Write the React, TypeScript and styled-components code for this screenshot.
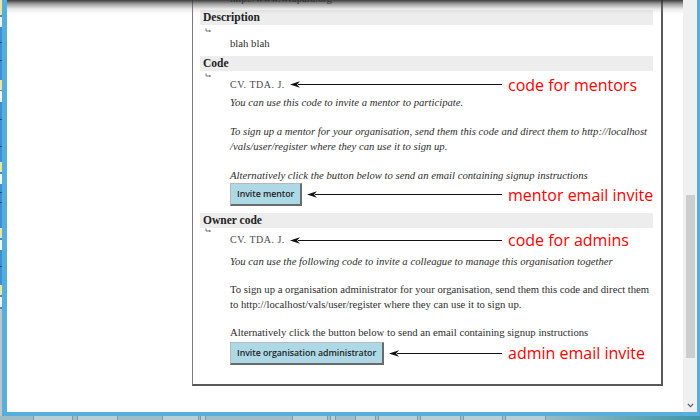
import React from "react";
import styled, { createGlobalStyle } from "styled-components";

const GlobalStyle = createGlobalStyle`
  html, body { margin: 0; padding: 0; }
  body { width: 700px; height: 420px; overflow: hidden; background: #5ab3de; }
`;

const Screen = styled.div`
  width: 700px;
  height: 420px;
  display: flex;
  flex-direction: column;
  overflow: hidden;
  background: #5ab3de;
`;

const Desktop = styled.div`
  display: flex;
  height: 416px;
`;

const LeftStrip = styled.div`
  width: 2px;
  display: flex;
  flex-direction: column;
  background: #3c8fd0;
`;

const StripMark = styled.div<{ $gap: number; $h: number; $c: string }>`
  flex-shrink: 0;
  margin-top: ${(p) => p.$gap}px;
  height: ${(p) => p.$h}px;
  background: ${(p) => p.$c};
`;

const StripRest = styled.div`
  flex: 1;
  margin-top: 2px;
  background: #c4c4c4;
`;

const Window = styled.div`
  flex: 1;
  display: flex;
  border-left: 5px solid #55aedc;
  border-right: 3px solid #55aedc;
  border-bottom: 4px solid #55aedc;
`;

const Viewport = styled.div`
  flex: 1;
  position: relative;
  overflow: hidden;
  background: #fff;
`;

const TopShade = styled.div`
  position: absolute;
  left: 0;
  right: 0;
  top: 0;
  height: 14px;
  pointer-events: none;
  background: linear-gradient(
    to bottom,
    rgba(40, 40, 40, 0.9) 0px,
    rgba(80, 80, 80, 0.55) 4px,
    rgba(150, 150, 150, 0.2) 9px,
    rgba(255, 255, 255, 0) 14px
  );
`;

const Page = styled.div`
  padding-left: 185px;
`;

const Panel = styled.div`
  width: 453px;
  margin-top: -9px;
  border-left: 1px solid #7a7a7a;
  border-right: 2px solid #595959;
  border-bottom: 2px solid #595959;
  padding: 0 8px 19px 7px;
  font-family: "Liberation Serif", "Times New Roman", serif;
  font-size: 10.7px;
  color: #2e2e2e;
`;

const UrlLine = styled.div`
  padding-left: 30px;
  height: 14px;
  line-height: 14px;
`;

const FieldLabel = styled.div<{ $mt: number }>`
  margin-top: ${(p) => p.$mt}px;
  height: 15px;
  line-height: 15px;
  padding-left: 3px;
  background: #ededed;
  font-weight: bold;
  font-size: 11.5px;
  color: #222;
`;

const Marker = styled.div<{ $h: number }>`
  height: ${(p) => p.$h}px;
  display: flex;
  align-items: flex-end;
  padding-left: 5px;
  svg { display: block; }
`;

const Value = styled.div<{ $mt: number }>`
  margin-top: ${(p) => p.$mt}px;
  padding-left: 30px;
  line-height: 14.5px;
`;

const Para = styled.p<{ $italic?: boolean; $mt: number }>`
  margin: ${(p) => p.$mt}px 0 0;
  padding-left: 30px;
  line-height: 14.5px;
  white-space: nowrap;
  font-style: ${(p) => (p.$italic ? "italic" : "normal")};
`;

const AnnotatedRow = styled.div<{ $mt: number }>`
  margin-top: ${(p) => p.$mt}px;
  padding-left: 30px;
  display: grid;
  grid-template-columns: auto 1fr 151px;
  align-items: center;
`;

const Code = styled.span`
  font-size: 10px;
  letter-spacing: 0.5px;
  line-height: 14.5px;
  color: #4a4a4a;
  white-space: nowrap;
`;

const Arrow = styled.div`
  display: flex;
  align-items: center;
  margin-left: 5px;
  svg { display: block; flex-shrink: 0; }
`;

const ArrowLine = styled.div`
  flex: 1;
  height: 1px;
  margin-left: -3px;
  background: #111;
`;

const Note = styled.span`
  padding-left: 6px;
  font-family: "Open Sans", "Noto Sans", sans-serif;
  font-size: 16px;
  line-height: 14px;
  color: #ff0000;
  white-space: nowrap;
`;

const InviteButton = styled.button`
  height: 23px;
  padding: 0 6px;
  margin: 0;
  background: #add8e6;
  border-style: solid;
  border-width: 1px 2px 2px 1px;
  border-color: #b9b9b9 #6a6a6a #6a6a6a #b9b9b9;
  font-family: "Open Sans", "Noto Sans", sans-serif;
  font-weight: 600;
  font-size: 8.8px;
  letter-spacing: -0.05px;
  color: #1f1f1f;
  white-space: nowrap;
`;

const Scrollbar = styled.div`
  width: 14px;
  display: flex;
  flex-direction: column;
  align-items: center;
  background: #f0f0f0;
`;

const Thumb = styled.div`
  margin-top: 195px;
  width: 9px;
  height: 163px;
  background: #cdcdcd;
`;

const ScrollSpacer = styled.div`
  flex: 1;
`;

const ScrollArrow = styled.div`
  height: 14px;
  display: flex;
  align-items: center;
  justify-content: center;
  svg { display: block; }
`;

const Taskbar = styled.div`
  height: 4px;
  display: flex;
  background: linear-gradient(90deg, #9dbcc6 0%, #a4c0c9 75%, #3e97a6 100%);
`;

const TaskItem = styled.div<{ $gap: number; $w: number }>`
  margin-left: ${(p) => p.$gap}px;
  width: ${(p) => p.$w}px;
  box-sizing: border-box;
  background: #b9cfd6;
  border-left: 1px solid #7c9ba6;
  border-right: 1px solid #7c9ba6;
`;

const stripMarks: [number, number, string][] = [
  [0, 15, "#efe6a2"],
  [2, 10, "#f4f8fb"],
  [15, 1, "#1d4f7a"],
  [17, 1, "#1d4f7a"],
  [19, 10, "#efe6a2"],
  [1, 11, "#f4f8fb"],
  [17, 1, "#1d4f7a"],
  [26, 1, "#1d4f7a"],
  [15, 10, "#efe6a2"],
  [2, 10, "#f4f8fb"],
  [8, 1, "#1d4f7a"],
  [9, 1, "#1d4f7a"],
  [25, 10, "#efe6a2"],
  [2, 10, "#f4f8fb"],
  [16, 1, "#1d4f7a"],
  [18, 10, "#efe6a2"],
  [2, 10, "#f4f8fb"],
];

const taskItems: [number, number][] = [
  [33, 40],
  [4, 41],
  [44, 37],
  [1, 6],
  [86, 36],
  [2, 6],
  [19, 21],
  [2, 40],
  [2, 41],
  [2, 40],
  [2, 41],
];

const FieldMarker = () => (
  <svg width="7" height="5" viewBox="0 0 7 5">
    <path d="M1 0.5 V3 H5.5" fill="none" stroke="#666" strokeWidth="0.9" />
    <path d="M4.3 1.8 L6 3 L4.3 4.2 Z" fill="#666" />
  </svg>
);

const Pointer = () => (
  <Arrow>
    <svg width="11" height="7" viewBox="0 0 11 7">
      <polygon points="0,3.5 10,0.3 7,3.5 10,6.7" fill="#111" />
    </svg>
    <ArrowLine />
  </Arrow>
);

const Chevron = () => (
  <svg width="7" height="5" viewBox="0 0 7 5">
    <polyline points="0.8,0.8 3.5,3.6 6.2,0.8" fill="none" stroke="#555" strokeWidth="1.1" />
  </svg>
);

export default function App() {
  return (
    <>
      <GlobalStyle />
      <Screen>
        <Desktop>
          <LeftStrip>
            {stripMarks.map(([gap, h, c], i) => (
              <StripMark key={i} $gap={gap} $h={h} $c={c} />
            ))}
            <StripRest />
          </LeftStrip>
          <Window>
            <Viewport>
              <Page>
                <Panel>
                  <UrlLine>http://www.wrapalu.org</UrlLine>

                  <FieldLabel $mt={5}>Description</FieldLabel>
                  <Marker $h={8}>
                    <FieldMarker />
                  </Marker>
                  <Value $mt={3}>blah blah</Value>

                  <FieldLabel $mt={5}>Code</FieldLabel>
                  <Marker $h={7}>
                    <FieldMarker />
                  </Marker>
                  <AnnotatedRow $mt={0}>
                    <Code>CV.  TDA. J.</Code>
                    <Pointer />
                    <Note>code for mentors</Note>
                  </AnnotatedRow>
                  <Para $italic $mt={3}>
                    You can use this code to invite a mentor to participate.
                  </Para>
                  <Para $italic $mt={14.5}>
                    To sign up a mentor for your organisation, send them this code and direct them to http://localhost
                    <br />
                    /vals/user/register where they can use it to sign up.
                  </Para>
                  <Para $italic $mt={14.5}>
                    Alternatively click the button below to send an email containing signup instructions
                  </Para>
                  <AnnotatedRow $mt={1}>
                    <InviteButton>Invite mentor</InviteButton>
                    <Pointer />
                    <Note>mentor email invite</Note>
                  </AnnotatedRow>

                  <FieldLabel $mt={7}>Owner code</FieldLabel>
                  <Marker $h={5}>
                    <FieldMarker />
                  </Marker>
                  <AnnotatedRow $mt={0}>
                    <Code>CV.  TDA. J.</Code>
                    <Pointer />
                    <Note>code for admins</Note>
                  </AnnotatedRow>
                  <Para $italic $mt={6}>
                    You can use the following code to invite a colleague to manage this organisation together
                  </Para>
                  <Para $mt={14}>
                    To sign up a organisation administrator for your organisation, send them this code and direct them
                    <br />
                    to http://localhost/vals/user/register where they can use it to sign up.
                  </Para>
                  <Para $mt={14}>
                    Alternatively click the button below to send an email containing signup instructions
                  </Para>
                  <AnnotatedRow $mt={2}>
                    <InviteButton>Invite organisation administrator</InviteButton>
                    <Pointer />
                    <Note>admin email invite</Note>
                  </AnnotatedRow>
                </Panel>
              </Page>
              <TopShade />
            </Viewport>
            <Scrollbar>
              <Thumb />
              <ScrollSpacer />
              <ScrollArrow>
                <Chevron />
              </ScrollArrow>
            </Scrollbar>
          </Window>
        </Desktop>
        <Taskbar>
          {taskItems.map(([gap, w], i) => (
            <TaskItem key={i} $gap={gap} $w={w} />
          ))}
        </Taskbar>
      </Screen>
    </>
  );
}
